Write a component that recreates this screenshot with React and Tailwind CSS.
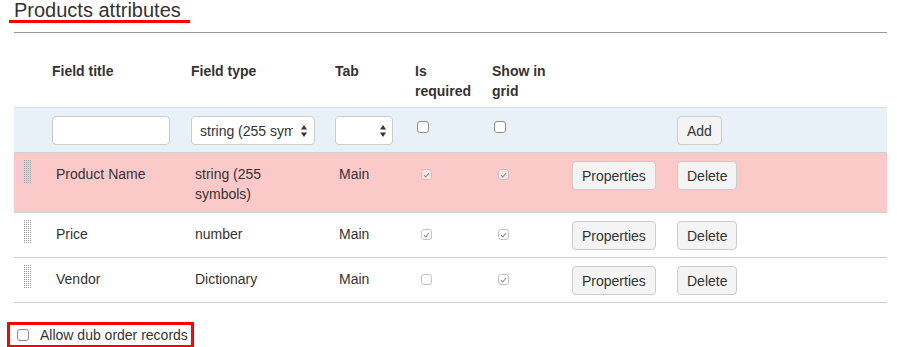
import React from "react";

const cols = "grid grid-cols-[30px_139px_144px_80px_77px_80px_105px_1fr]";

const rows = [
    { title: "Product Name", type: "string (255 symbols)", tab: "Main", required: true, grid: true, highlight: true },
    { title: "Price", type: "number", tab: "Main", required: true, grid: true },
    { title: "Vendor", type: "Dictionary", tab: "Main", required: false, grid: true },
];

function Check({ checked, disabled, className = "" }) {
    if (!disabled) {
        return (
            <span className={"block w-3 h-3 rounded-[3px] border border-[#8e8e8e] bg-white " + className} />
        );
    }
    return (
        <span className={"flex items-center justify-center w-[11px] h-[11px] rounded-[3px] border border-[#c4c4c4] bg-white/50 " + className}>
            {checked && (
                <svg width="7" height="6" viewBox="0 0 7 6">
                    <path d="M1 3.2 L2.8 5 L6 1" fill="none" stroke="#8a8a8a" strokeWidth="1.1" />
                </svg>
            )}
        </span>
    );
}

function Arrows() {
    return (
        <svg width="6" height="12" viewBox="0 0 6 12" className="shrink-0">
            <path d="M3 0 L6 4.5 L0 4.5 Z" fill="#333" />
            <path d="M0 7.5 L6 7.5 L3 12 Z" fill="#333" />
        </svg>
    );
}

function DragHandle() {
    return (
        <svg width="8" height="24" viewBox="0 0 8 24">
            <defs>
                <pattern id="dots" width="2" height="2" patternUnits="userSpaceOnUse">
                    <rect width="1" height="1" fill="#9a9a9a" />
                </pattern>
            </defs>
            <rect width="8" height="24" fill="url(#dots)" />
        </svg>
    );
}

function Button({ children }) {
    return (
        <button className="h-[29px] px-[9px] rounded-[4px] border border-[#cccccc] bg-[#f4f4f4] text-[14px] text-[#333] leading-5">
            {children}
        </button>
    );
}

export default function App() {
    return (
        <div className="w-[897px] h-[347px] overflow-hidden bg-white pl-[14px] pr-[10px] text-[14px] leading-5 text-[#333] font-['Liberation_Sans',Arial,sans-serif]">
            {/* heading */}
            <h2 className="inline-block -ml-[5px] pl-[5px] pr-[9px] text-[20px] leading-5 font-normal border-b-[3px] border-[#ff0000]">
                Products attributes
            </h2>
            <div className="mt-[9px] border-t border-[#9a9a9a]" />

            {/* table */}
            <div className="mt-[19px]">
                <div className={cols + " border-b border-[#dddddd] font-bold"}>
                    <div />
                    <div className="px-2 pt-[9px] pb-[6px]">Field title</div>
                    <div className="px-2 pt-[9px] pb-[6px]">Field type</div>
                    <div className="px-2 pt-[9px] pb-[6px]">Tab</div>
                    <div className="px-2 pt-[9px] pb-[6px]">Is required</div>
                    <div className="px-2 pt-[9px] pb-[6px]">Show in grid</div>
                    <div />
                    <div />
                </div>

                {/* add row */}
                <div className={cols + " bg-[#e8f0f8] border-b border-[#d0d0d0]"}>
                    <div />
                    <div className="px-2 pt-2 pb-[7px]">
                        <input className="block w-[118px] h-[29px] rounded-[4px] border border-[#cccccc] bg-white" />
                    </div>
                    <div className="px-2 pt-2 pb-[7px]">
                        <div className="flex items-center w-[124px] h-[29px] pl-2 pr-[7px] gap-2 rounded-[4px] border border-[#cccccc] bg-white">
                            <span className="flex-1 overflow-hidden whitespace-nowrap">string (255 symbols)</span>
                            <Arrows />
                        </div>
                    </div>
                    <div className="px-2 pt-2 pb-[7px]">
                        <div className="flex items-center justify-end w-[58px] h-[29px] pr-[6px] rounded-[4px] border border-[#cccccc] bg-white">
                            <Arrows />
                        </div>
                    </div>
                    <div className="px-2 pt-[13px]">
                        <Check className="ml-[2px]" />
                    </div>
                    <div className="px-2 pt-[13px]">
                        <Check className="ml-[2px]" />
                    </div>
                    <div />
                    <div className="px-2 pt-2 pb-[7px]">
                        <Button>Add</Button>
                    </div>
                </div>

                {rows.map((r) => (
                    <div key={r.title} className={cols + " border-b border-[#d0d0d0] " + (r.highlight ? "bg-[#fcc9c9]" : "bg-white")}>
                        <div className="pl-[10px] pt-[7px]">
                            <DragHandle />
                        </div>
                        <div className="pl-3 pr-2 pt-[11px] pb-2">{r.title}</div>
                        <div className="pl-3 pr-2 pt-[11px] pb-2">{r.type}</div>
                        <div className="pl-3 pr-2 pt-[11px] pb-2">{r.tab}</div>
                        <div className="pl-3 pr-2 pt-[16px]">
                            <Check disabled checked={r.required} className="ml-[2px]" />
                        </div>
                        <div className="pl-3 pr-2 pt-[16px]">
                            <Check disabled checked={r.grid} className="ml-[2px]" />
                        </div>
                        <div className="px-2 pt-2 pb-[7px]">
                            <Button>Properties</Button>
                        </div>
                        <div className="px-2 pt-2 pb-[7px]">
                            <Button>Delete</Button>
                        </div>
                    </div>
                ))}
            </div>

            {/* footer option */}
            <label className="mt-[19px] -ml-[7px] inline-flex items-center border-[3px] border-[#ff0000] pl-[7px] pr-[3px]">
                <Check />
                <span className="ml-[11px]">Allow dub order records</span>
            </label>
        </div>
    );
}
